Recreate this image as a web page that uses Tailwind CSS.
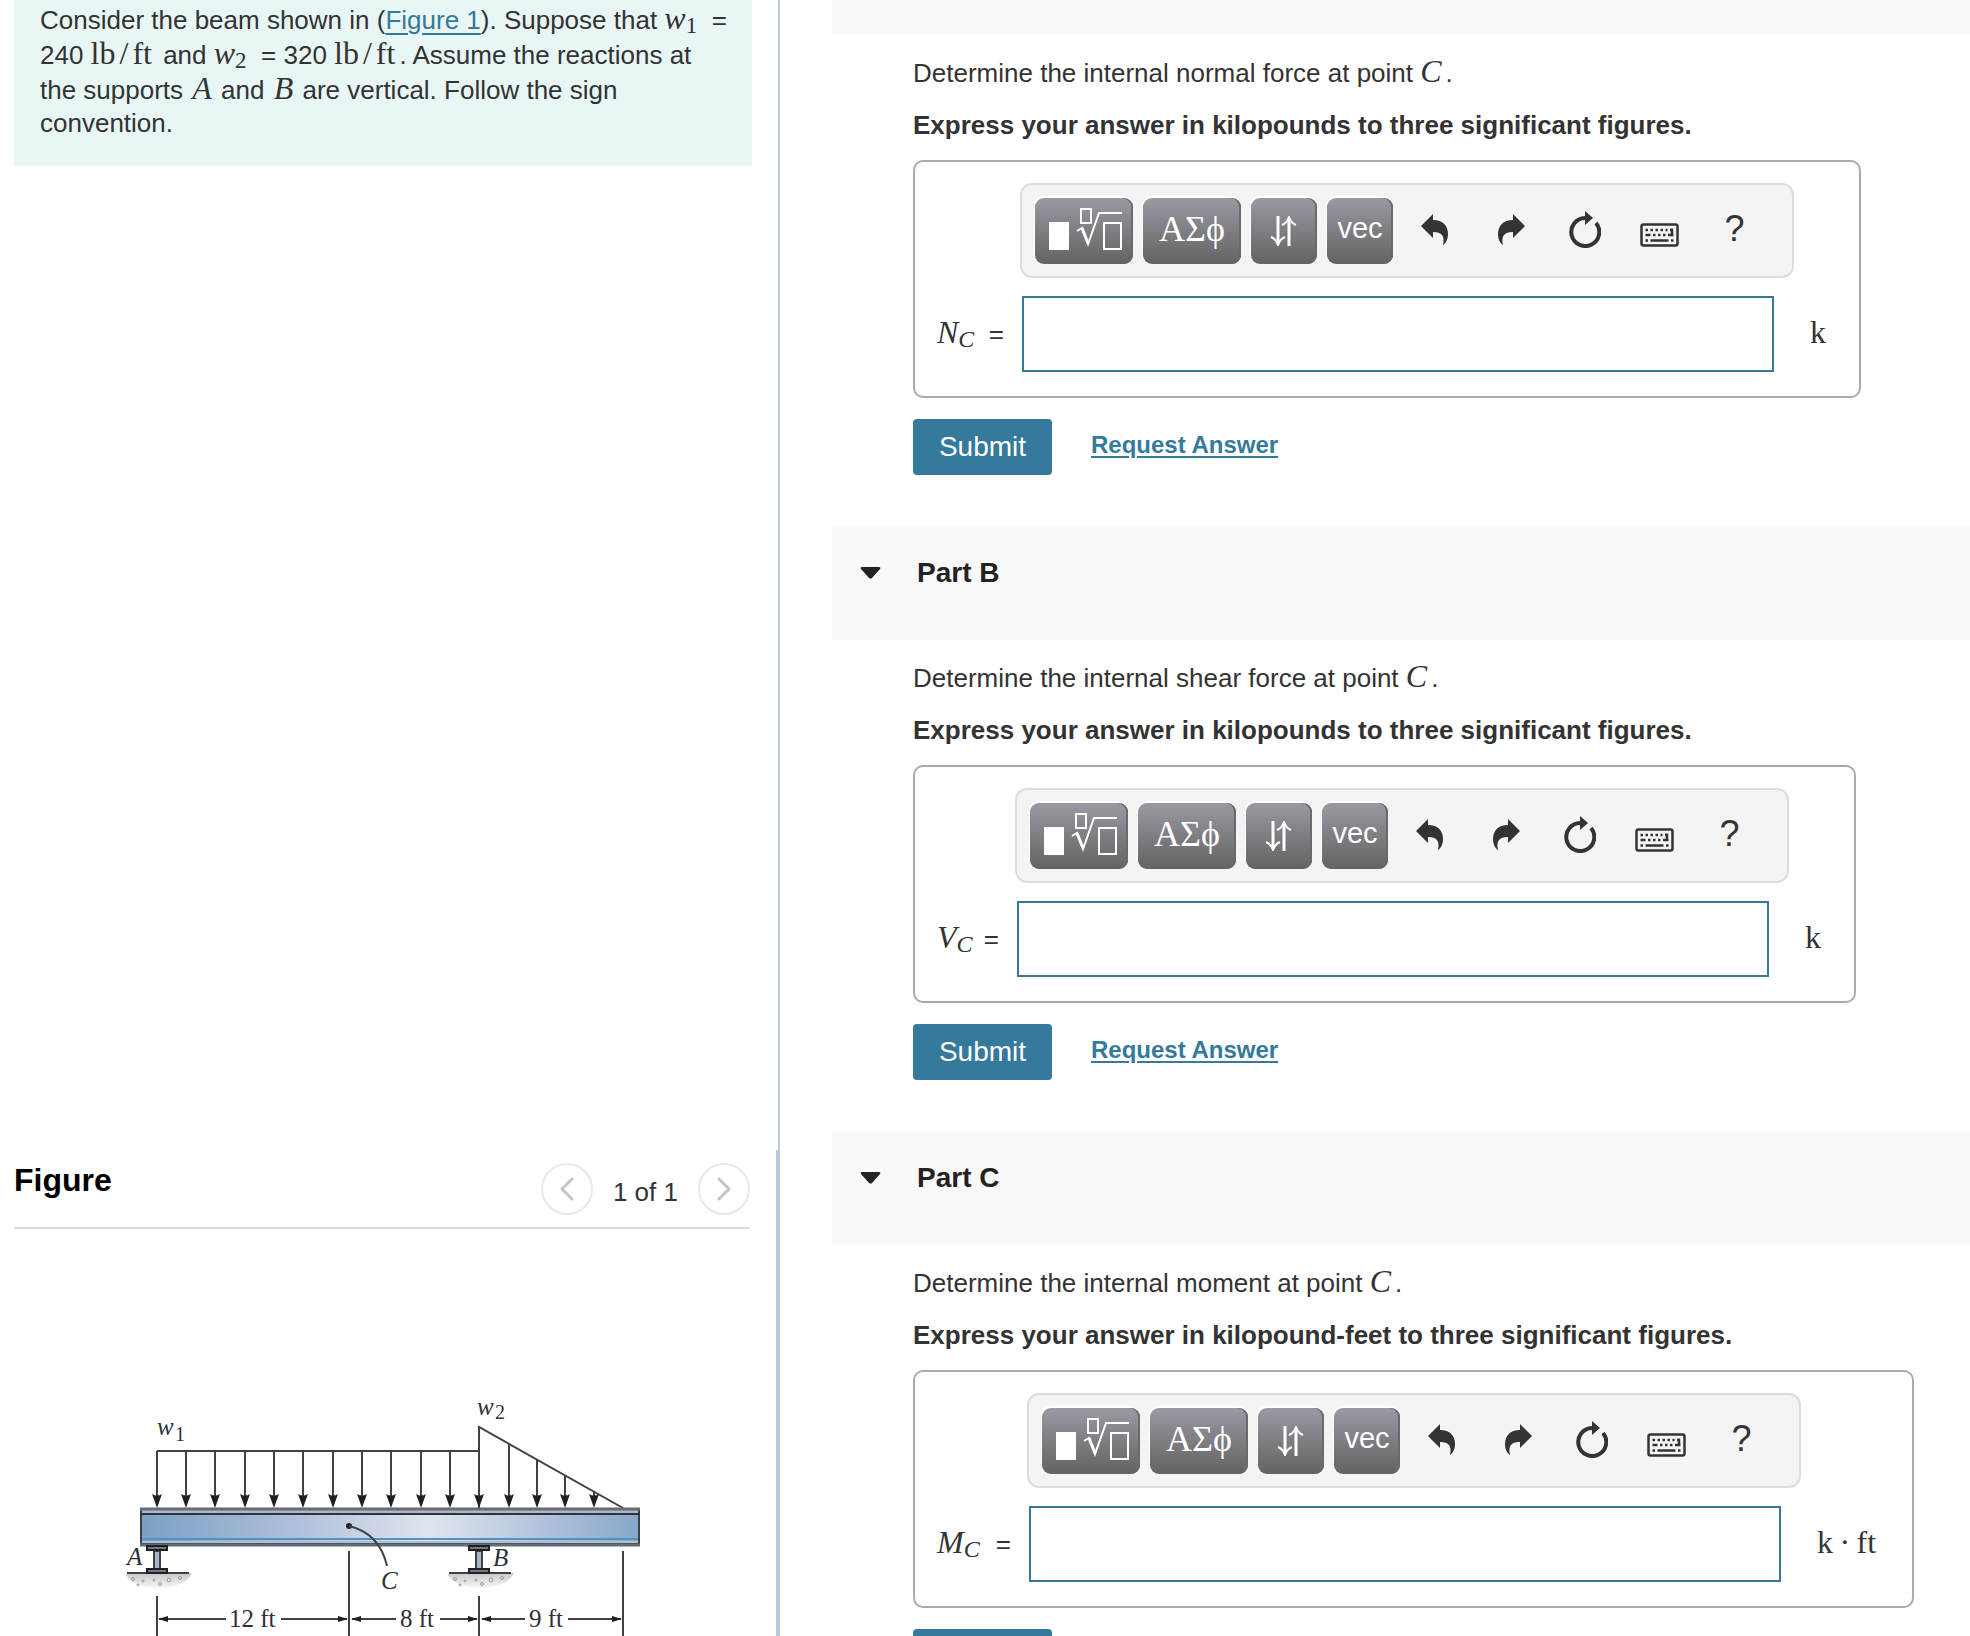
<!DOCTYPE html>
<html lang="en">
  <head>
    <meta charset="UTF-8" />
    <meta name="viewport" content="width=device-width, initial-scale=1.0" />
    <script src="https://cdn.jsdelivr.net/npm/@tailwindcss/browser@4"></script>
    <title>Internal Loadings</title>
  </head>
  <body
    class="h-screen overflow-hidden bg-white font-['Liberation_Sans',Arial,sans-serif] text-[26px] text-[#333]"
  >
    <div class="flex h-full">
      <!-- Left: problem statement and figure -->
      <aside class="flex flex-col w-2/5 max-w-[780px] h-full shrink-0">
        <section class="flex-1 min-h-0 pl-[14px] pr-[26px] border-r-2 border-[#b9cbdc]">
          <p class="bg-[#e8f7f6] pl-[26px] pr-6 pt-[2px] pb-[26px] leading-[33px]">
            Consider the beam shown in (<a href="#figure" class="text-[#35799c] underline underline-offset-4 decoration-2">Figure 1</a>). Suppose that
            <span class="whitespace-nowrap"><i class="font-['Liberation_Serif',serif] text-[32px] leading-none">w</i><span class="font-['Liberation_Serif',serif] text-[23px] leading-none relative top-1">1</span>&nbsp; =</span>
            <span class="whitespace-nowrap">240 <span class="font-['Liberation_Serif',serif] text-[32px] leading-none mr-1">lb<span class="mx-1">/</span>ft</span></span>
            and
            <span class="whitespace-nowrap"><i class="font-['Liberation_Serif',serif] text-[32px] leading-none">w</i><span class="font-['Liberation_Serif',serif] text-[23px] leading-none relative top-1">2</span>&nbsp; = 320</span>
            <span class="whitespace-nowrap"><span class="font-['Liberation_Serif',serif] text-[32px] leading-none mr-1">lb<span class="mx-1">/</span>ft</span>.</span>
            Assume the reactions at the supports
            <i class="mx-0.5 font-['Liberation_Serif',serif] text-[32px] leading-none">A</i>
            and
            <i class="mx-0.5 font-['Liberation_Serif',serif] text-[32px] leading-none">B</i>
            are vertical. Follow the sign convention.
          </p>
        </section>

        <section id="figure" class="pl-[14px] pr-[26px] border-r-4 border-[#b9cbdc]">
          <div class="flex items-center justify-between h-[79px] border-b-2 border-[#ddd]">
            <h2 class="pb-[18px] text-[32px] font-bold text-black leading-none">Figure</h2>
            <div class="flex items-center gap-5">
              <button type="button" aria-label="Previous figure" class="flex items-center justify-center rounded-full size-[52px] border-2 border-[#e8e8e8]">
                <svg width="14" height="24" viewBox="0 0 14 24" fill="none" stroke="#c4c4c4" stroke-width="3" stroke-linecap="round" stroke-linejoin="round"><path d="M12 2L2 12l10 10" /></svg>
              </button>
              <span class="pt-2">1 of 1</span>
              <button type="button" aria-label="Next figure" class="flex items-center justify-center rounded-full size-[52px] border-2 border-[#e8e8e8]">
                <svg width="14" height="24" viewBox="0 0 14 24" fill="none" stroke="#c4c4c4" stroke-width="3" stroke-linecap="round" stroke-linejoin="round"><path d="M2 2l10 10L2 22" /></svg>
              </button>
            </div>
          </div>

          <svg id="beam" class="block w-[560px] max-w-full ml-[86px] mt-[151px]" viewBox="0 0 560 256" fill="none" stroke="#414042" stroke-width="2">
            <defs>
              <linearGradient id="web" x1="0" x2="1" y1="0" y2="0">
                <stop offset="0" stop-color="#7aa0c4" />
                <stop offset="0.33" stop-color="#b3c2dc" />
                <stop offset="0.58" stop-color="#dfe5ef" />
                <stop offset="0.8" stop-color="#b3c3dc" />
                <stop offset="1" stop-color="#86a8ca" />
              </linearGradient>
              <linearGradient id="soil" x1="0" x2="0" y1="0" y2="1">
                <stop offset="0" stop-color="#c8c8c8" />
                <stop offset="1" stop-color="#f8f8f8" />
              </linearGradient>
              <marker id="tip" markerUnits="userSpaceOnUse" markerWidth="10" markerHeight="8" refX="9" refY="4" orient="auto">
                <path d="M0 1L10 4L0 7Z" fill="#231f20" stroke="none" />
              </marker>
              <g id="support">
                <path d="M-30 27H35Q29 40 6 42Q-22 43 -31 29Z" fill="url(#soil)" stroke="none" />
                <g fill="none" stroke="#999" stroke-width="1">
                  <circle cx="-24" cy="33" r="1.5" /><circle cx="-14" cy="35" r="1" /><circle cx="-3" cy="34" r="1" />
                  <circle cx="3" cy="38" r="1.5" /><circle cx="12" cy="34" r="2" /><circle cx="23" cy="32" r="1.5" />
                  <circle cx="-19" cy="39" r="1" />
                </g>
                <path d="M-30 27H32" />
                <path d="M-3 5h6v18h-6z" fill="#a9b4c8" />
                <path d="M-10 0H10V4H-10Z M-10 23H10V27H-10Z" fill="#6b7a90" stroke="#231f20" />
              </g>
            </defs>

            <!-- distributed load -->
            <path d="M57 71H379M379 128V47L523 128" />
            <g id="loads"></g>

            <!-- beam -->
            <path d="M41 129H539V164H41Z" fill="url(#web)" />
            <path d="M42 130H538V134H42Z" fill="#a9b7cf" stroke="none" />
            <path d="M40 134H540" stroke="#333" />
            <path d="M42 159H538" stroke="#4f93c2" />
            <path d="M42 162H538" stroke="#a9c0d8" />
            <path d="M40 129H540M40 165H540" stroke="#666b70" stroke-width="3" />

            <use href="#support" x="57" y="166" />
            <use href="#support" x="379" y="166" />
            <circle cx="249" cy="146" r="3" fill="#231f20" stroke="none" />
            <path d="M249 146C270 151 282 164 287 186" />

            <!-- dimensions -->
            <path d="M57 216V256M249 171V256M379 216V256M523 171V256" />
            <g marker-end="url(#tip)">
              <path d="M126 239H59" /><path d="M181 239H247" /><path d="M296 239H252" />
              <path d="M340 239H377" /><path d="M425 239H382" /><path d="M468 239H521" />
            </g>
            <g fill="#2f2f38" stroke="none" font-family="Liberation Serif, serif" font-size="25">
              <text x="57" y="55" font-style="italic">w</text><text x="75" y="61" font-size="20">1</text>
              <text x="377" y="35" font-style="italic">w</text><text x="395" y="39" font-size="20">2</text>
              <text x="27" y="185" font-style="italic">A</text>
              <text x="393" y="186" font-style="italic">B</text>
              <text x="281" y="209" font-style="italic">C</text>
              <text x="129" y="247">12 ft</text>
              <text x="300" y="247">8 ft</text>
              <text x="429" y="247">9 ft</text>
            </g>
          </svg>
        </section>
      </aside>

      <!-- Right: answer parts -->
      <main class="flex-1 min-w-0 pl-[52px]">
        <div class="h-[35px] bg-[#f9f9f9]"></div>
        <div id="parts"></div>
      </main>
    </div>

    <script>
      const parts = [
        { name: "", quantity: "normal force", unitText: "kilopounds", symbol: "N", labelWidth: 85, unit: "k", unitWidth: 49 },
        { name: "Part B", quantity: "shear force", unitText: "kilopounds", symbol: "V", labelWidth: 80, unit: "k", unitWidth: 49 },
        { name: "Part C", quantity: "moment", unitText: "kilopound-feet", symbol: "M", labelWidth: 92, unit: "k&thinsp;·&thinsp;ft", unitWidth: 95 },
      ];

      const undoPath = "M0 12L12 0V6C22 6 27 12 27 20C27 25 25 29 22 31C24 22 21 18 12 18V24Z";

      const header = (part) => `
        <header class="flex h-[113px] pt-[30px] pl-7 bg-[#f9f9f9] text-[#222]">
          <button type="button" aria-label="Collapse ${part.name}" class="h-8 w-[21px]">
            <svg width="21" height="13" viewBox="0 0 21 13"><path d="M2 0h17q2 0 1 2l-8 9q-1 1-3 0L1 2Q0 0 2 0z" fill="#222" /></svg>
          </button>
          <h2 class="ml-9 text-[28px] font-bold leading-8">${part.name}</h2>
        </header>`;

      const keyClass =
        "flex items-center justify-center h-[66px] rounded-[9px] text-white bg-linear-to-b from-[#9b99a3] to-[#636363] shadow-[-1px_-2px_0_#fff,inset_-2px_0_0_#6a6a6a]";
      const iconClass = "flex items-center justify-center w-[75px] h-[66px]";

      const toolbar = (part) => `
        <div role="toolbar" aria-label="Math tools" class="flex w-[774px] max-w-full h-[95px] pt-[13px] pl-[13px] rounded-xl border-2 border-[#ddd] bg-[#f4f4f4]" style="margin-left: ${part.labelWidth}px">
          <div class="flex gap-[10px]">
            <button type="button" aria-label="Templates" class="${keyClass} w-[98px] pb-1">
              <svg width="76" height="44" viewBox="0 0 76 44" fill="none" stroke="#fff" stroke-width="2">
                <path d="M3 15h20v28H3z" fill="#fff" stroke="none" />
                <path d="M35 2h10v14H35zM58 16h17v26H58z" />
                <path d="M31 24l5-3 6 16L53 6h23" />
                <path d="M36 21l6 15" stroke-width="3" />
              </svg>
            </button>
            <button type="button" aria-label="Greek letters" class="${keyClass} w-[98px] pb-1 font-['Liberation_Serif',serif] text-[36px]">ΑΣϕ</button>
            <button type="button" aria-label="Sub and superscript" class="${keyClass} w-[66px]">
              <svg width="28" height="30" viewBox="0 0 28 30" fill="none" stroke="#fff" stroke-width="3">
                <path d="M8 0v28M19 30V2" />
                <path d="M1 21q5 2 7 8q2-6 7-8M12 9q5-2 7-8q2 6 7 8" stroke-width="2" />
              </svg>
            </button>
            <button type="button" class="${keyClass} w-[66px] pb-1 text-[29px]">vec</button>
          </div>
          <div class="flex ml-1 text-[#333]">
            <button type="button" aria-label="Undo" class="${iconClass} pb-1">
              <svg width="27" height="31" viewBox="0 0 27 31" fill="currentColor"><path d="${undoPath}" /></svg>
            </button>
            <button type="button" aria-label="Redo" class="${iconClass} pb-1 pl-1">
              <svg width="27" height="31" viewBox="0 0 27 31" fill="currentColor"><path d="${undoPath}" transform="matrix(-1 0 0 1 27 0)" /></svg>
            </button>
            <button type="button" aria-label="Reset" class="${iconClass} pb-1">
              <svg width="32" height="37" viewBox="0 0 32 37"><path d="M16 7A14 14 0 1 0 27 12" fill="none" stroke="currentColor" stroke-width="4" /><path d="M16 0l8 7L16 14z" fill="currentColor" /></svg>
            </button>
            <button type="button" aria-label="Keyboard shortcuts" class="${iconClass} pt-2">
              <svg width="39" height="24" viewBox="0 0 39 24" fill="none" stroke="currentColor" stroke-width="2.5">
                <rect x="1.5" y="1.5" width="36" height="21" rx="2" />
                <path d="M5.5 7h22" stroke-dasharray="2.5 2.5" />
                <path d="M5.5 12h5M13 12h2.5M18 12h2.5M23 12h2.5M28 12h5.5M32 5.5v6.5M30 7h2.5" />
                <path d="M5.5 17.5H8M10.5 17.5h18M31 17.5h2.5" />
              </svg>
            </button>
            <button type="button" aria-label="Help" class="${iconClass} pb-1 text-[36px]">?</button>
          </div>
        </div>`;

      const renderPart = (part, i) => `
        <section>
          ${part.name ? header(part) : ""}
          <div class="h-[492px] pl-[81px]">
            <p class="pt-5 leading-9">Determine the internal ${part.quantity} at point <i class="mr-1 font-['Liberation_Serif',serif] text-[32px] leading-none">C</i>.</p>
            <p class="mt-4 font-bold leading-9">Express your answer in ${part.unitText} to three significant figures.</p>
            <form class="mt-[17px]">
              <div class="w-fit max-w-full h-[238px] pt-[21px] pl-5 rounded-[10px] border-2 border-[#aaa]">
                ${toolbar(part)}
                <div class="flex items-center mt-[18px]">
                  <label for="answer-${i}" class="flex items-baseline justify-between pl-0.5 pr-[18px] pb-1 shrink-0" style="width: ${part.labelWidth + 2}px">
                    <span class="font-['Liberation_Serif',serif] italic text-[32px]">${part.symbol}<span class="relative top-1 text-[24px]">C</span></span>
                    <span>=</span>
                  </label>
                  <input id="answer-${i}" type="text" class="w-[752px] min-w-0 h-[76px] px-3 border-2 border-[#35799c] outline-none" />
                  <span class="ml-9 pb-1 shrink-0 whitespace-nowrap font-['Liberation_Serif',serif] text-[32px]" style="width: ${part.unitWidth}px">${part.unit}</span>
                </div>
              </div>
              <div class="flex gap-[39px] mt-[21px]">
                <button type="submit" class="w-[139px] h-14 rounded bg-[#35799c] text-white text-[28px]">Submit</button>
                <a href="#" class="pt-2 text-[24px] font-bold text-[#35799c] underline decoration-2 underline-offset-3">Request Answer</a>
              </div>
            </form>
          </div>
        </section>`;

      document.getElementById("parts").innerHTML = parts.map(renderPart).join("");

      // load arrows: uniform part hangs from y=71, triangular part from the sloped line
      const arrows = [57, 86, 115, 145, 174, 203, 233, 262, 291, 321, 350, 379, 409, 437, 465, 494];
      document.getElementById("loads").innerHTML = arrows
        .map((x) => {
          const top = x <= 379 ? 71 : 47 + ((x - 379) * 81) / 144;
          return `<path d="M${x} ${top}V120" /><path d="M${x - 5} 114Q${x} 117 ${x + 5} 114L${x} 128Z" fill="#231f20" stroke="none" />`;
        })
        .join("");
    </script>
  </body>
</html>
